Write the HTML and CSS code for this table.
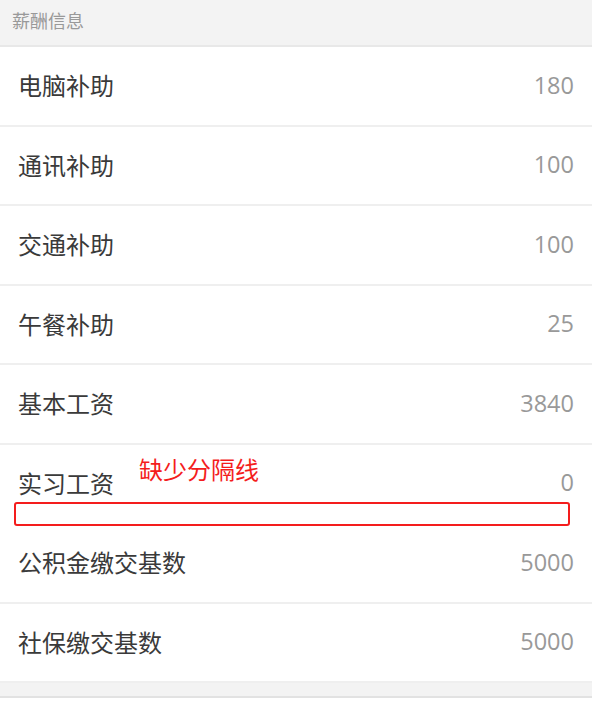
FILE: index.html
```html
<!DOCTYPE html>
<html lang="zh-CN">
<head>
    <meta charset="UTF-8">
    <meta name="viewport" content="width=device-width, initial-scale=1.0">
    <title>薪酬信息</title>
    <link rel="stylesheet" href="styles.css">
</head>
<body>
    <div class="section-title">薪酬信息</div>
    <ul class="salary-list">
        <li class="salary-item"><span class="label">电脑补助</span><span class="value">180</span></li>
        <li class="salary-item"><span class="label">通讯补助</span><span class="value">100</span></li>
        <li class="salary-item"><span class="label">交通补助</span><span class="value">100</span></li>
        <li class="salary-item"><span class="label">午餐补助</span><span class="value">25</span></li>
        <li class="salary-item"><span class="label">基本工资</span><span class="value">3840</span></li>
        <li class="salary-item no-line"><span class="label">实习工资</span><span class="value">0</span></li>
        <li class="salary-item"><span class="label">公积金缴交基数</span><span class="value">5000</span></li>
        <li class="salary-item"><span class="label">社保缴交基数</span><span class="value">5000</span></li>
    </ul>
    <div class="gap"></div>
    <div class="next-section"></div>

    <!-- review note -->
    <div class="note-text">缺少分隔线</div>
    <div class="note-box"></div>
</body>
</html>
```

FILE: styles.css
```css
* { padding: 0; margin: 0; box-sizing: border-box; }
body {
    font-family: "Open Sans", "Noto Sans CJK SC", sans-serif;
    background-color: #fff;
    color: #333;
    position: relative;
    width: 592px;
}
.section-title {
    height: 47px;
    padding: 8px 12px 0;
    font-size: 18px;
    line-height: 26px;
    color: #999;
    background-color: #f3f3f3;
    border-bottom: 2px solid #e8e8e8;
}
.salary-list { list-style: none; }
.salary-item {
    height: 79.5px;
    padding: 0 18px 2px;
    display: flex;
    align-items: center;
    justify-content: space-between;
    border-bottom: 2px solid #efefef;
}
.salary-item.no-line { border-bottom-color: transparent; }
.label { font-size: 24px; color: #3a3a3a; }
.value { font-size: 23.5px; color: #999; }
.gap {
    height: 15px;
    background-color: #f3f3f3;
    border-bottom: 2px solid #e2e2e2;
}
.next-section { height: 40px; background-color: #fff; }
.note-text {
    position: absolute;
    left: 139px;
    top: 453px;
    font-size: 24px;
    line-height: 32px;
    color: #f41d1d;
    font-family: "Noto Sans CJK SC", sans-serif;
}
.note-box {
    position: absolute;
    left: 14px;
    top: 502px;
    width: 556px;
    height: 24px;
    border: 2px solid #f41d1d;
    border-radius: 3px;
}
```
